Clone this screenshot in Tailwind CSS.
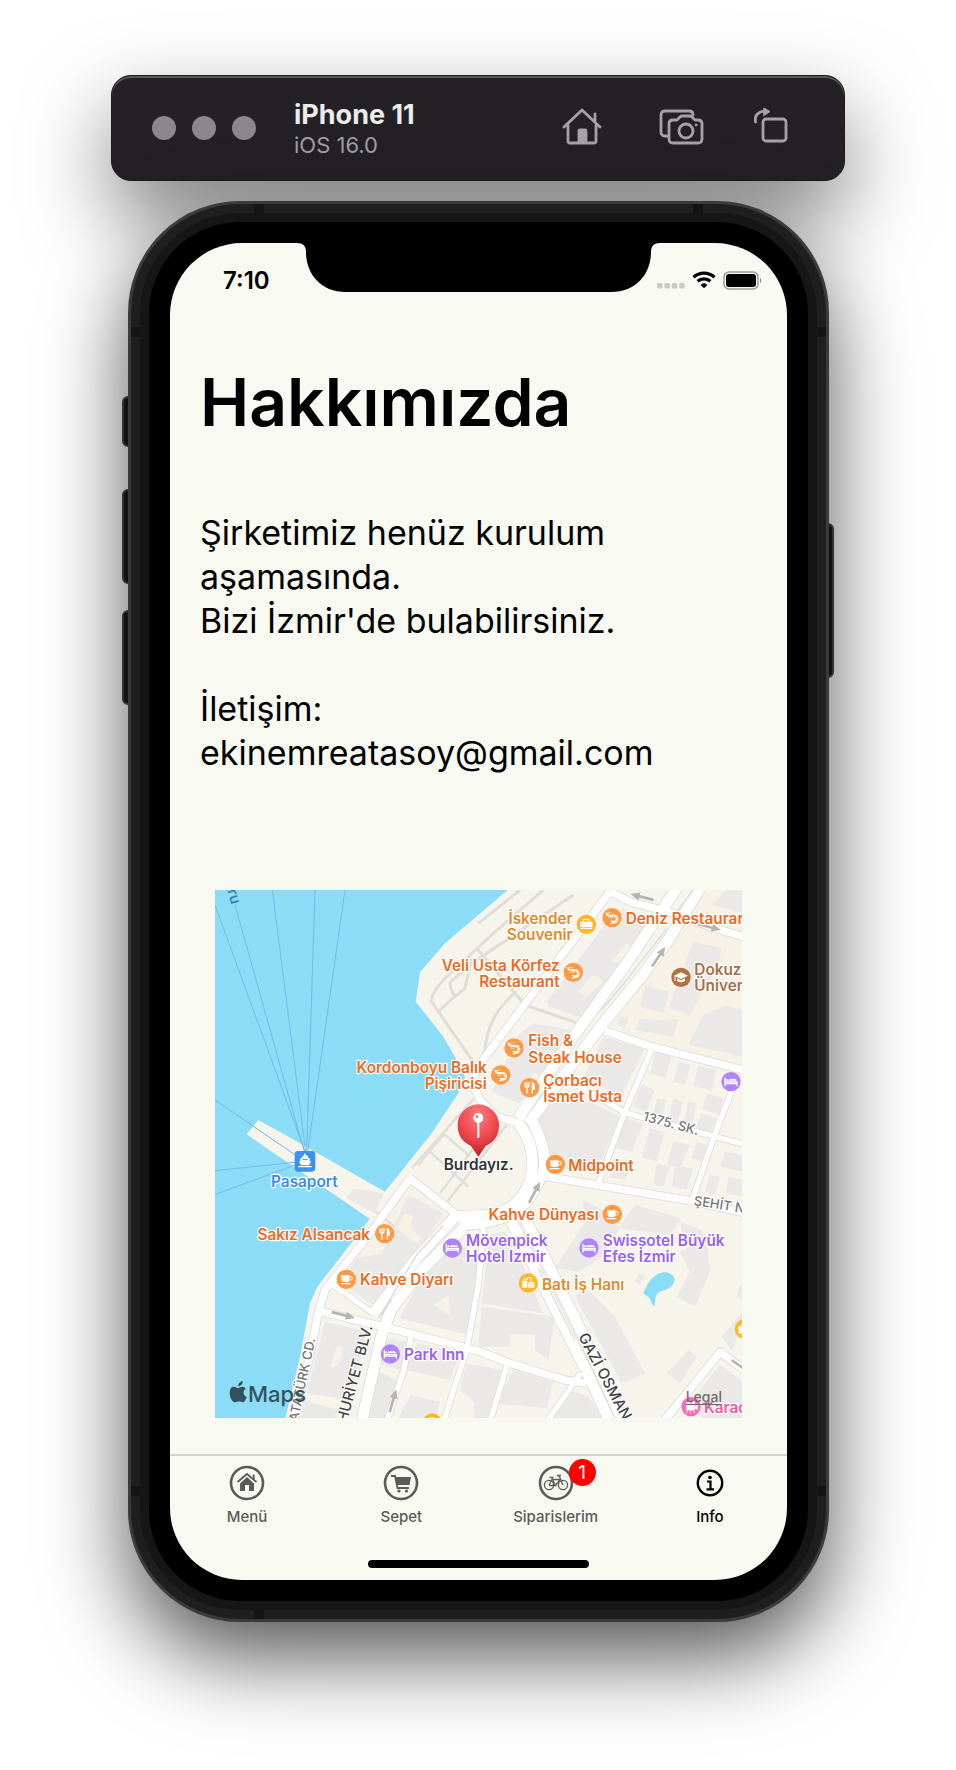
<!DOCTYPE html>
<html lang="tr">
<head>
<meta charset="utf-8">
<meta name="viewport" content="width=device-width, initial-scale=1">
<title>Hakkımızda</title>
<script src="https://cdn.jsdelivr.net/npm/@tailwindcss/browser@4"></script>
</head>
<body class="bg-white font-['Inter',sans-serif] text-black overflow-x-hidden">
<div class="mx-auto flex w-full max-w-[734px] flex-col items-center gap-5 pt-[75px] pb-[149px]">

  <!-- Simulator toolbar -->
  <header class="relative flex h-[106px] w-full items-center rounded-[20px] border border-[#1a1a1c] bg-[#232126] pl-10 pr-14 shadow-[inset_0_2px_0_#58585b,0_36px_84px_rgba(0,0,0,0.5)]">
    <div class="flex gap-4">
      <span class="size-6 rounded-full bg-[#8b888d]"></span>
      <span class="size-6 rounded-full bg-[#8b888d]"></span>
      <span class="size-6 rounded-full bg-[#8b888d]"></span>
    </div>
    <div class="ml-[38px] flex-1 pt-[3px]">
      <p class="text-[27px] leading-[30px] font-bold text-[#ececec]">iPhone 11</p>
      <p class="text-[22px] leading-[30px] text-[#a09ea2]">iOS 16.0</p>
    </div>
    <div class="flex items-center gap-[50px] text-[#a5a2a8]">
      <button type="button" aria-label="Home">
        <svg class="block h-10 w-[44px]" viewBox="0 0 44 40" fill="none" stroke="currentColor" stroke-width="2.8" stroke-linecap="round" stroke-linejoin="round"><path d="M4 19 22 2 40 19M8 17v16q0 2 2 2h24q2 0 2-2V17M35 14V6"/><path d="M19 34V23q0-1 1-1h5q1 0 1 1v11z" fill="currentColor"/></svg>
      </button>
      <button type="button" aria-label="Screenshot">
        <svg class="block h-10 w-[50px]" viewBox="0 0 50 40" fill="none" stroke="currentColor" stroke-width="2.8" stroke-linecap="round" stroke-linejoin="round"><path d="M14 28H11q-4 0-4-4V7q0-4 4-4h24q4 0 4 4"/><path d="M19 12h4l3-3q1-1 2-1h8q1 0 2 1l3 3h3q4 0 4 4v15q0 4-4 4H19q-4 0-4-4V16q0-4 4-4z"/><circle cx="32" cy="23" r="7"/><circle cx="42" cy="17" r="1" fill="currentColor" stroke-width="1"/></svg>
      </button>
      <button type="button" aria-label="Rotate">
        <svg class="block h-10 w-[34px]" viewBox="0 0 34 40" fill="none" stroke="currentColor" stroke-width="2.8" stroke-linecap="round" stroke-linejoin="round"><rect x="9" y="11" width="23" height="22" rx="3"/><path d="M1.500 14C0 7 5 3 12 3"/><path d="M10 0l6 3.500-6 4z" fill="currentColor" stroke-width="1"/></svg>
      </button>
    </div>
  </header>

  <!-- Phone body -->
  <div class="relative w-full pl-[17px] pr-4">
    <span class="absolute left-[11px] top-[195px] h-[51px] w-3 rounded-l-md border-2 border-[#4a4a4a] bg-[#1a1a1a]"></span>
    <span class="absolute left-[11px] top-[288px] h-[95px] w-3 rounded-l-md border-2 border-[#4a4a4a] bg-[#1a1a1a]"></span>
    <span class="absolute left-[11px] top-[409px] h-[95px] w-3 rounded-l-md border-2 border-[#4a4a4a] bg-[#1a1a1a]"></span>
    <span class="absolute right-[11px] top-[322px] h-[155px] w-3 rounded-r-md border-2 border-[#4a4a4a] bg-[#1a1a1a]"></span>

    <div class="relative rounded-[112px] border-[3px] border-[#3b3b3b] bg-[#1f1f1f] p-[9px] shadow-[0_36px_84px_rgba(0,0,0,0.66)]">
      <span class="absolute left-[123px] top-0 h-[9px] w-[10px] bg-[#141414]"></span>
      <span class="absolute right-[123px] top-0 h-[9px] w-[10px] bg-[#141414]"></span>
      <span class="absolute left-[123px] bottom-0 h-[9px] w-[10px] bg-[#141414]"></span>
      <span class="absolute left-0 top-[123px] h-[10px] w-[9px] bg-[#141414]"></span>
      <span class="absolute right-0 top-[123px] h-[10px] w-[9px] bg-[#141414]"></span>
      <span class="absolute left-0 bottom-[123px] h-[10px] w-[9px] bg-[#141414]"></span>
      <span class="absolute right-0 bottom-[123px] h-[10px] w-[9px] bg-[#141414]"></span>
      <div class="rounded-[100px] bg-[#161616] p-[9px]">
        <div class="rounded-[91px] bg-black p-[21px]">
          <div class="overflow-hidden rounded-[72px] bg-[#f8f9f1]">

            <!-- Status bar and notch -->
            <div class="flex h-[49px] items-start">
              <div class="w-[136px] pl-[53px] pt-[23px] text-[24px] leading-[30px] font-semibold">7:10</div>
              <svg class="block h-[49px] w-[345px] overflow-visible" viewBox="0 0 345 49"><path d="M-9 0C-3 0 0 3 0 9 0 30 14 49 40 49H305C331 49 345 30 345 9 345 3 348 0 354 0z"/></svg>
              <div class="flex flex-1 justify-end gap-[7px] pt-[28px] pr-6">
                <svg class="block h-5 w-[28px]" viewBox="0 0 28 20" fill="#c9cac4"><rect x="0" y="12" width="5.500" height="5.500" rx="1.500"/><rect x="7.400" y="12" width="5.500" height="5.500" rx="1.500"/><rect x="14.800" y="12" width="5.500" height="5.500" rx="1.500"/><rect x="22.200" y="12" width="5.500" height="5.500" rx="1.500"/></svg>
                <svg class="block h-5 w-6" viewBox="0 0 24 20" fill="none" stroke="#000" stroke-width="3.200"><path d="M1.500 6.200a15.500 15.500 0 0 1 21 0M5.600 10.300a9.500 9.500 0 0 1 12.800 0"/><path d="M12 17.300 8.600 13.900a5 5 0 0 1 6.800 0z" fill="#000" stroke="none"/></svg>
                <svg class="block h-5 w-10" viewBox="0 0 40 20"><rect x="1" y="1" width="34" height="17" rx="5" fill="none" stroke="#9b9c98" stroke-width="1.500"/><rect x="3" y="3" width="30" height="13" rx="3"/><path d="M37 6.500q3 3 0 6z" fill="#9b9c98"/></svg>
              </div>
            </div>

            <main>
              <div class="px-[30px] pt-[70px]">
                <h1 class="text-[66px] leading-[80px] font-semibold">Hakkımızda</h1>
                <p class="mt-[69px] text-[34px] leading-[44px]">Şirketimiz henüz kurulum aşamasında.<br>Bizi İzmir'de bulabilirsiniz.<br><br>İletişim:<br>ekinemreatasoy@gmail.com</p>
              </div>

              <!-- Map -->
              <div class="relative mx-[45px] mt-[115px] overflow-hidden">
                <svg class="block w-full" viewBox="15 15 1581 1584" role="img" aria-label="Harita">
                  <defs>
                    <radialGradient id="pin" cx="0.5" cy="0.2" r="0.8"><stop offset="0" stop-color="#ff7a7c"/><stop offset="0.55" stop-color="#ee4a50"/><stop offset="1" stop-color="#c01f2a"/></radialGradient>
                    <g id="w34" fill="none" stroke-linejoin="round"><path d="M1400 10 1250 235 1090 455 925 700M1470 10 1375 165 1290 280 1180 415 1100 520 955 715M925 715C985 790 975 880 935 935 900 985 850 995 735 993M965 705C1015 800 1010 860 985 890 950 970 900 1012 750 1020M740 990 620 1120 490 1285M760 1030 640 1150 545 1270 515 1350 480 1500 455 1610M905 1010 1000 1200 1125 1450 1200 1610M945 1000 1020 1150 1100 1310 1240 1610"/></g>
                    <g id="w22" fill="none" stroke-linejoin="round"><path d="M600 880 480 1045 345 1215 325 1285 300 1410 250 1610M1200 20 950 350 815 530 785 590 810 645 860 695 930 715M1200 20 1260 50 1390 85 1500 125 1610 158M600 880 735 985M1010 875 1455 950 1610 985M1185 438 1325 485 1610 558M335 1280 600 1345 810 1400 900 1435 1065 1485 1130 1495M1360 1610 1530 1402 1610 1460"/></g>
                    <g id="w16" fill="none" stroke-linejoin="round"><path d="M1328 485 1245 680 1165 895M1100 600 1250 685 1400 725 1610 780M1572 600 1510 760 1447 945M370 1200 490 1285M605 1350 580 1460 530 1610M820 1030 805 1200 770 1395 700 1610M893 1435 840 1610M1112 1465 1010 1610"/></g>
                    <g id="shrimp" fill="none" stroke="#fff" stroke-linecap="round"><circle r="29" fill="#fd9a43" stroke="none"/><path d="M-15-10Q-12-6-6-6H4" stroke-width="6"/><path d="M4-6Q15-5 15 4T7 13" stroke-width="8"/><path d="M5 12-2 10M6 15-2 17" stroke-width="4"/><path d="M-20-14H-3M-10 0Q-5 3 2 0" stroke-width="2"/><path d="M7-11 4-1M19-3 10 1M18 10 10 6" stroke="#fd9a43" stroke-width="2"/></g>
                    <g id="fork" fill="none" stroke="#fff" stroke-width="4" stroke-linecap="round"><circle r="29" fill="#fd9a43" stroke="none"/><path d="M-14-15V-7Q-14-1-8-1T-2-7V-15M-8-15V16"/><path d="M8 16V-15Q15-11 14 4H9" fill="#fff"/></g>
                    <g id="cup" fill="#fff"><circle r="29" fill="#fd9a43"/><path d="M-15-12H10V-1Q10 8 2 8H-7Q-15 8-15-1zM-17 11H12V15H-17z"/><path d="M10-8h4q4 0 4 5t-5 5H9" fill="none" stroke="#fff" stroke-width="3"/></g>
                    <g id="bed" fill="none" stroke="#fff" stroke-width="4" stroke-linecap="round"><circle r="29" fill="#b184fb" stroke="none"/><path d="M-18-11V12M-18 6H18M18 12V1H-18"/><path d="M-8-3Q-8-8-3-8H12Q17-8 17-3z" fill="#fff" stroke="none"/><circle cx="-12" cy="-5" r="3" fill="#fff" stroke="none"/></g>
                    <g id="bag" fill="#fff"><circle r="29" fill="#fdb924"/><path d="M-18-8H18V8H-18zM-18 10H18V14H-18z"/><path d="M-8-8V-15H8V-8" fill="none" stroke="#fff" stroke-width="3"/></g>
                    <g id="arrow" fill="#b4b4b3"><path d="M-36-4H8V-12L36 0 8 12V4H-36z"/></g>
                  </defs>

                  <rect width="1600" height="1600" fill="#8bdcf7"/>
                  <g fill="#f7f4ec">
                    <path d="M893 15 705 175 630 262 617 350 700 455 735 515 765 575 745 625 665 745 525 920 478 1003 390 1118 322 1205 300 1255 270 1415 226 1600H1600V15z"/>
                    <path d="M145 705 270 775 525 920 485 1006 110 748z"/>
                  </g>
                  <path d="M1480 15H1600V560L1190 440 1300 290zM610 890 730 990 500 1270 380 1190z" fill="#f7f2e5"/>

                  <!-- Ferry routes -->
                  <path d="M15 60 285 800M75 60 283 800M187 15 287 800M315 15 290 800M405 15 293 800M15 645 285 830M15 857 285 829M15 929 285 829" fill="none" stroke="#6ebde6" stroke-width="3"/>

                  <!-- Park paths -->
                  <g fill="none" stroke="#dfded8" stroke-width="9" stroke-linejoin="round">
                    <path d="M1000 15 850 145 700 285Q660 330 665 350L685 380 800 545M1090 30 800 225 722 290Q715 300 735 335L765 310 785 220M685 380 735 333M800 190 945 360 1105 415M825 520Q820 400 920 320M930 15 805 115"/>
                    <path d="M810 620 605 850M745 690 700 745 780 815M660 800 775 905M700 750 625 840M790 790 690 925M890 720 700 965M485 970 560 1030" stroke-width="7"/>
                  </g>

                  <!-- Buildings -->
                  <g fill="#ebe9e7">
                    <path d="M1180 125 1240 70 1310 100 1325 150 1130 385 1105 395 1015 365 1010 350zM1450 170 1535 190 1520 260 1485 300 1440 390 1375 370 1415 265zM1305 300 1377 320 1360 385 1290 365zM1290 400 1345 405 1405 402 1390 455 1275 435zM1480 390 1545 362 1600 375V515L1435 480zM1550 15H1600V85L1505 60zM1230 395 1255 400 1245 430 1222 420zM970 415 1085 435 1020 560 925 655 845 620 925 450z"/>
                    <path d="M1180 455 1305 492 1250 600 1235 635 1120 580zM1340 490 1388 505 1365 580 1320 565zM1405 530 1442 540 1425 600 1390 590zM1465 542 1520 555 1505 618 1450 600zM1295 600 1335 615 1310 680 1268 665zM1342 640 1370 645 1350 710 1325 700zM1390 640 1420 650 1400 720 1375 710zM1435 650 1460 655 1445 730 1420 720zM1490 625 1540 640 1525 690 1477 672zM1475 685 1520 700 1500 750 1455 735zM1245 700 1300 715 1265 800 1215 790zM1320 730 1365 740 1340 830 1295 815zM1390 770 1440 780 1410 850 1370 840zM1460 770 1490 780 1475 830 1445 820zM1545 800 1600 810V860L1530 845zM1210 820 1265 830 1245 885 1200 878zM1340 835 1380 845 1360 905 1330 898zM1395 840 1450 850 1430 915 1385 905zM1500 870 1530 875 1515 930 1485 920zM1555 875 1600 885V935L1548 925z"/>
                    <path d="M1025 655 1140 650 1230 695 1160 860 1020 850Q1015 760 975 700zM1275 960 1415 1000 1380 1050 1225 1030zM1120 945 1180 975 1230 1030 1170 1120 1105 1160 1035 1150 1125 1010zM1410 1100 1490 1060 1500 1160 1455 1265 1400 1235 1440 1160zM1410 1010 1475 1035 1490 1075 1420 1065zM1125 1205 1215 1295 1305 1465 1235 1495 1095 1235zM1435 1395 1460 1415 1410 1495 1370 1465zM815 1265 1035 1295 1015 1425 975 1395V1350L900 1345V1385L805 1385zM880 1040 905 1060 1000 1285 815 1255 840 1050zM800 1440 875 1455 835 1600H790zM910 1455 1030 1490 1010 1570 860 1555zM1080 1515 1135 1535 1180 1600H1030zM1535 1355 1600 1275V1315L1565 1395zM1530 1440 1600 1490V1600H1480L1435 1555zM1590 1200 1600 1195V1245L1580 1235zM1285 1165 1305 1170 1290 1200 1275 1190z"/>
                    <path d="M595 930 700 985 600 1135 490 1260 395 1195 440 1120 515 1105zM345 1310 470 1340 420 1545 290 1525zM720 1050 805 1120 775 1350 570 1300 610 1220zM510 1355 590 1370 570 1455 500 1435zM620 1375 750 1405 720 1485 590 1455zM285 1545 385 1575 375 1600H265zM500 1455 560 1485 530 1600H465zM770 1435 810 1445V1565L750 1515zM600 1530 690 1550 680 1600H565zM430 910 520 925 495 985 410 940z"/>
                  </g>
                  <g fill="#f7f2e5"><path d="M585 985 610 995 600 1030 635 1060 620 1075 560 1030zM380 1385 400 1390 385 1440 360 1450zM670 1260 715 1230 720 1290zM1250 175 1275 190 1240 235 1205 230zM1150 270 1180 290 1130 335 1105 320zM970 565 1000 570 950 610z"/></g>
                  <path d="M1300 1225Q1325 1160 1370 1162 1400 1170 1392 1192 1385 1212 1350 1220 1335 1222 1334 1262 1326 1263 1320 1240z" fill="#8bdcf7"/>

                  <!-- Roads -->
                  <g stroke="#dddcd9"><use href="#w16" stroke-width="21"/><use href="#w22" stroke-width="27"/><use href="#w34" stroke-width="37"/></g>
                  <g stroke="#fff"><use href="#w16" stroke-width="16"/><use href="#w22" stroke-width="22"/><use href="#w34" stroke-width="32"/></g>
                  <path d="M1370 130 1250 285 1175 375M1400 80 1450 15M700 1020 620 1110 505 1300M985 1150 1095 1365M545 1245 515 1290" fill="none" stroke="#dddcd9" stroke-width="4"/>
                  <use href="#arrow" transform="translate(1296 36) rotate(194)"/>
                  <use href="#arrow" transform="translate(1498 126) rotate(15)"/>
                  <use href="#arrow" transform="translate(1346 215) rotate(-56)"/>
                  <use href="#arrow" transform="translate(974 922) rotate(-62)"/>
                  <use href="#arrow" transform="translate(400 1290) rotate(14)"/>
                  <use href="#arrow" transform="translate(549 1547) rotate(-74)"/>
                  <path d="M1565 1425 1600 1450" stroke="#b4b4b3" stroke-width="8"/>

                  <!-- Street names -->
                  <g font-size="39" font-weight="500" fill="#757575" stroke="#fff" stroke-width="6" paint-order="stroke" stroke-linejoin="round">
                    <text transform="translate(1297 706) rotate(15)">1375. SK.</text>
                    <text transform="translate(1450 960) rotate(9)">ŞEHİT N</text>
                    <text transform="translate(316 1362) rotate(-78)" text-anchor="end">ATATÜRK CD.</text>
                    <text transform="translate(488 1325) rotate(-75)" text-anchor="end" font-size="45" fill="#444">HURİYET BLV.</text>
                    <text transform="translate(1104 1354) rotate(62)" font-size="45" fill="#444">GAZİ OSMAN</text>
                  </g>
                  <text transform="translate(64 60) rotate(74)" text-anchor="end" font-size="45" font-weight="600" fill="#2f88b8">ru</text>

                  <!-- Place markers -->
                  <use href="#bag" x="1129" y="118"/>
                  <use href="#shrimp" x="1206" y="98"/>
                  <use href="#shrimp" x="1090" y="262"/>
                  <use href="#shrimp" x="912" y="489"/>
                  <use href="#shrimp" x="872" y="570"/>
                  <use href="#fork" x="959" y="608"/>
                  <use href="#bed" x="1563" y="590"/>
                  <use href="#cup" x="1036" y="838"/>
                  <use href="#cup" x="1207" y="988"/>
                  <use href="#fork" x="524" y="1046"/>
                  <use href="#cup" x="409" y="1183"/>
                  <use href="#bed" x="727" y="1089"/>
                  <use href="#bed" x="1137" y="1089"/>
                  <use href="#bed" x="541" y="1407"/>
                  <use href="#bag" x="667" y="1614"/>
                  <use href="#bag" x="1603" y="1332"/>
                  <g transform="translate(955 1194)" fill="#fff"><circle r="29" fill="#fdb924"/><path d="M-18-6H-3V14H-18zM0-3H18V14H0z"/><path d="M-14-6Q-14-15-10-15T-6-6M-3-9V-16H8V-4M2 0 9 7 16 0" fill="none" stroke="#fff" stroke-width="3"/><path d="M2 1 9 7 16 1" fill="none" stroke="#fdb924" stroke-width="2"/></g>
                  <g transform="translate(1413 277)" fill="#fff"><circle r="29" fill="#b3713f"/><path d="M-21-5 0-15 21-5 0 5zM-12 3 0 9 12 3V11Q0 19-12 11z"/><path d="M-18-4V11" stroke="#fff" stroke-width="3"/></g>
                  <g transform="translate(285 829)" fill="#fff"><rect x="-31" y="-31" width="62" height="62" rx="10" fill="#3992ee"/><path d="M-3-23H3V-17H9V-10H14V-1L18 1 12 12H-12L-18 1-14-1V-10H-9V-17H-3zM-20 14H20V18H-20z"/><path d="M-8-6H8" stroke="#3992ee" stroke-width="3"/></g>
                  <g transform="translate(1443 1565)" fill="#fff"><circle r="29" fill="#fc6cb3"/><circle cx="-8" cy="-11" r="6"/><circle cx="7" cy="-11" r="6"/><path d="M-13-5H11V9H-13zM12 0 19-5V8L12 4zM-9 9-13 18M7 9 11 18M-1 9V18" stroke="#fff" stroke-width="3"/></g>

                  <!-- Place names -->
                  <g font-size="46" font-weight="600" stroke="#fff" stroke-width="7" paint-order="stroke" stroke-linejoin="round">
                    <g fill="#ec6b24">
                      <text x="1247" y="116">Deniz Restaurar</text>
                      <text x="955" y="484">Fish &amp;</text><text x="955" y="533">Steak House</text>
                      <text x="1000" y="603">Çorbacı</text><text x="1000" y="651">İsmet Usta</text>
                      <text x="1075" y="858">Midpoint</text>
                      <text x="450" y="1200">Kahve Diyarı</text>
                      <g text-anchor="end">
                        <text x="1049" y="257">Veli Usta Körfez</text><text x="1049" y="305">Restaurant</text>
                        <text x="830" y="565">Kordonboyu Balık</text><text x="830" y="613">Pişiricisi</text>
                        <text x="1166" y="1006">Kahve Dünyası</text>
                        <text x="480" y="1065">Sakız Alsancak</text>
                      </g>
                    </g>
                    <g fill="#e08a2c"><g text-anchor="end"><text x="1088" y="116">İskender</text><text x="1088" y="165">Souvenir</text></g><text x="996" y="1215">Batı İş Hanı</text></g>
                    <g fill="#a66f49"><text x="1453" y="270">Dokuz</text><text x="1453" y="319">Üniver</text></g>
                    <g fill="#9762f2">
                      <text x="768" y="1083">Mövenpick</text><text x="768" y="1131">Hotel Izmir</text>
                      <text x="1178" y="1083">Swissotel Büyük</text><text x="1178" y="1131">Efes İzmir</text>
                      <text x="582" y="1424">Park Inn</text>
                    </g>
                    <text x="1482" y="1584" fill="#f5589f">Karac</text>
                    <text x="283" y="907" text-anchor="middle" fill="#3a8de3">Pasaport</text>
                    <text x="806" y="856" text-anchor="middle" fill="#333">Burdayız.</text>
                  </g>

                  <!-- Selected location pin -->
                  <path d="M805 815 783 783Q743 765 743 720A62 62 0 0 1 867 720Q867 765 827 783z" fill="url(#pin)"/>
                  <circle cx="805" cy="699" r="15" fill="#fff"/><circle cx="801" cy="695" r="4" fill="#f1676b"/>
                  <path d="M805 710V756" stroke="#fff" stroke-width="6" stroke-linecap="round"/>

                  <!-- Apple Maps mark -->
                  <g fill="#35515c">
                    <path d="M97 1505C90 1505 88 1509 84 1509 80 1509 77 1505 71 1505 50 1507 60 1552 76 1552 81 1552 82 1549 87 1549 92 1549 93 1552 98 1552 104 1552 109 1541 110 1536 98 1530 98 1515 108 1511 105 1507 101 1505 97 1505zM85 1504C84 1495 92 1489 98 1489 99 1497 92 1504 85 1504z"/>
                    <text x="114" y="1550" font-size="66" font-weight="500">Maps</text>
                  </g>
                </svg>
                <a href="#legal" class="absolute right-[20px] bottom-[13px] border-b border-[#6f6a6c] text-[14px] leading-[15px] font-medium text-[#6f6a6c]">Legal</a>
              </div>
            </main>

            <!-- Tab bar -->
            <nav class="mt-9 flex h-[126px] flex-col items-center justify-between border-t-2 border-[#d3d4cf] pb-3">
              <div class="grid w-full grid-cols-4 text-[15px] leading-[18px] font-medium text-[#5b5b59]">
                <button type="button" class="flex flex-col items-center gap-[7px] pt-[9px]">
                  <svg class="block size-9" viewBox="0 0 36 36"><circle cx="18" cy="18" r="16" fill="none" stroke="currentColor" stroke-width="2.600"/><path d="M11 18.500 18 12l7 6.500V26H20v-6h-4v6h-5z" fill="currentColor"/><path d="M8.500 17 18 9l9.500 8M24.700 14v-4.500" fill="none" stroke="currentColor" stroke-width="1.800"/></svg>
                  <span>Menü</span>
                </button>
                <button type="button" class="flex flex-col items-center gap-[7px] pt-[9px]">
                  <svg class="block size-9" viewBox="0 0 36 36"><circle cx="18" cy="18" r="16" fill="none" stroke="currentColor" stroke-width="2.600"/><path d="M12 12H28L26.500 20H14z" fill="currentColor"/><path d="M8 11h4l2.500 12H26" fill="none" stroke="currentColor" stroke-width="1.800"/><circle cx="16" cy="26" r="1.600" fill="currentColor"/><circle cx="23.500" cy="26" r="1.600" fill="currentColor"/></svg>
                  <span>Sepet</span>
                </button>
                <button type="button" class="flex flex-col items-center gap-[7px] pt-[9px]">
                  <span class="relative block">
                    <svg class="block size-9" viewBox="0 0 36 36" fill="none" stroke="currentColor"><circle cx="18" cy="18" r="16" stroke-width="2.600"/><g stroke-width="1.300"><circle cx="11" cy="20" r="4.600"/><circle cx="25" cy="20" r="4.600"/><path d="M11 20 14 14.500H22L17.500 20.500H11M17.500 20.500 13.600 12.500M11.500 12.300H15.500M25 20 21 10.500H19M20.500 10.500H23"/></g></svg>
                    <span class="absolute -top-[6px] left-[31px] flex size-[27px] items-center justify-center rounded-full bg-[#fe0000] text-[19px] leading-[27px] font-normal text-white">1</span>
                  </span>
                  <span>Siparislerim</span>
                </button>
                <button type="button" class="flex flex-col items-center gap-[7px] pt-[9px] text-black" aria-current="page">
                  <svg class="block size-9" viewBox="0 0 36 36"><circle cx="18" cy="18" r="12.200" fill="none" stroke="currentColor" stroke-width="2.400"/><circle cx="18" cy="12.500" r="1.800" fill="currentColor"/><path d="M15 16.500H18.500V24M14.500 24.300H22" fill="none" stroke="currentColor" stroke-width="2.200"/></svg>
                  <span>Info</span>
                </button>
              </div>
              <span class="h-2 w-[221px] rounded-full bg-black"></span>
            </nav>
          </div>
        </div>
      </div>
    </div>
  </div>
</div>
</body>
</html>
